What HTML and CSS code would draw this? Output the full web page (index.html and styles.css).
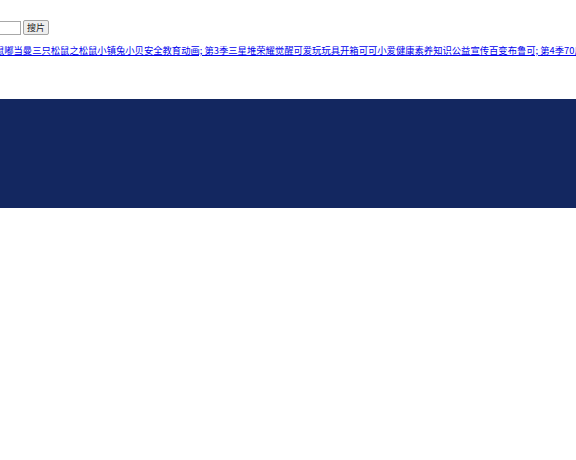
FILE: index.html
```html
<!DOCTYPE html>
<html lang="zh">
<head>
<meta charset="utf-8">
<title>搜片</title>
<link rel="stylesheet" href="styles.css">
</head>
<body>
<div class="page">
  <form class="search">
    <input class="search-input" type="text">
    <button class="search-btn" type="button">搜片</button>
  </form>
  <div class="links">
    <a href="#" class="link">松鼠嘟当曼三只松鼠之松鼠小镇兔小贝安全教育动画; 第3季三星堆荣耀觉醒可爱玩玩具开箱可可小爱健康素养知识公益宣传百变布鲁可; 第4季70后</a>
  </div>
  <div class="band"></div>
</div>
</body>
</html>
```
FILE: styles.css
```css
html, body {
  margin: 0;
  padding: 0;
  background: #ffffff;
  overflow: hidden;
}
.page {
  width: 576px;
  overflow: hidden;
  font-family: "Noto Sans CJK SC", "Noto Sans", sans-serif;
}
.search {
  display: flex;
  align-items: center;
  gap: 2px;
  margin: 0;
  padding-top: 20px;
  margin-left: -50px;
  height: 15px;
}
.search-input {
  box-sizing: border-box;
  width: 71px;
  height: 14px;
  margin: 0;
  padding: 0 2px;
  border: 1px solid #a8a8a8;
  background: #fff;
  font-size: 9px;
}
.search-btn {
  box-sizing: border-box;
  height: 15px;
  margin: 0;
  padding: 0 3px;
  border: 1px solid #a3a3a3;
  border-radius: 2px;
  background: #eeeeee;
  color: #222;
  font-family: "Noto Sans CJK SC", sans-serif;
  font-size: 9px;
  line-height: 13px;
}
.links {
  margin-top: 8px;
  height: 15px;
  white-space: nowrap;
  overflow: hidden;
  font-size: 9.32px;
  line-height: 15px;
}
.link {
  display: inline-block;
  margin-left: -14.4px;
  color: #0000ee;
  text-decoration: underline;
}
.band {
  margin-top: 41px;
  height: 109px;
  background: #132760;
}
```
